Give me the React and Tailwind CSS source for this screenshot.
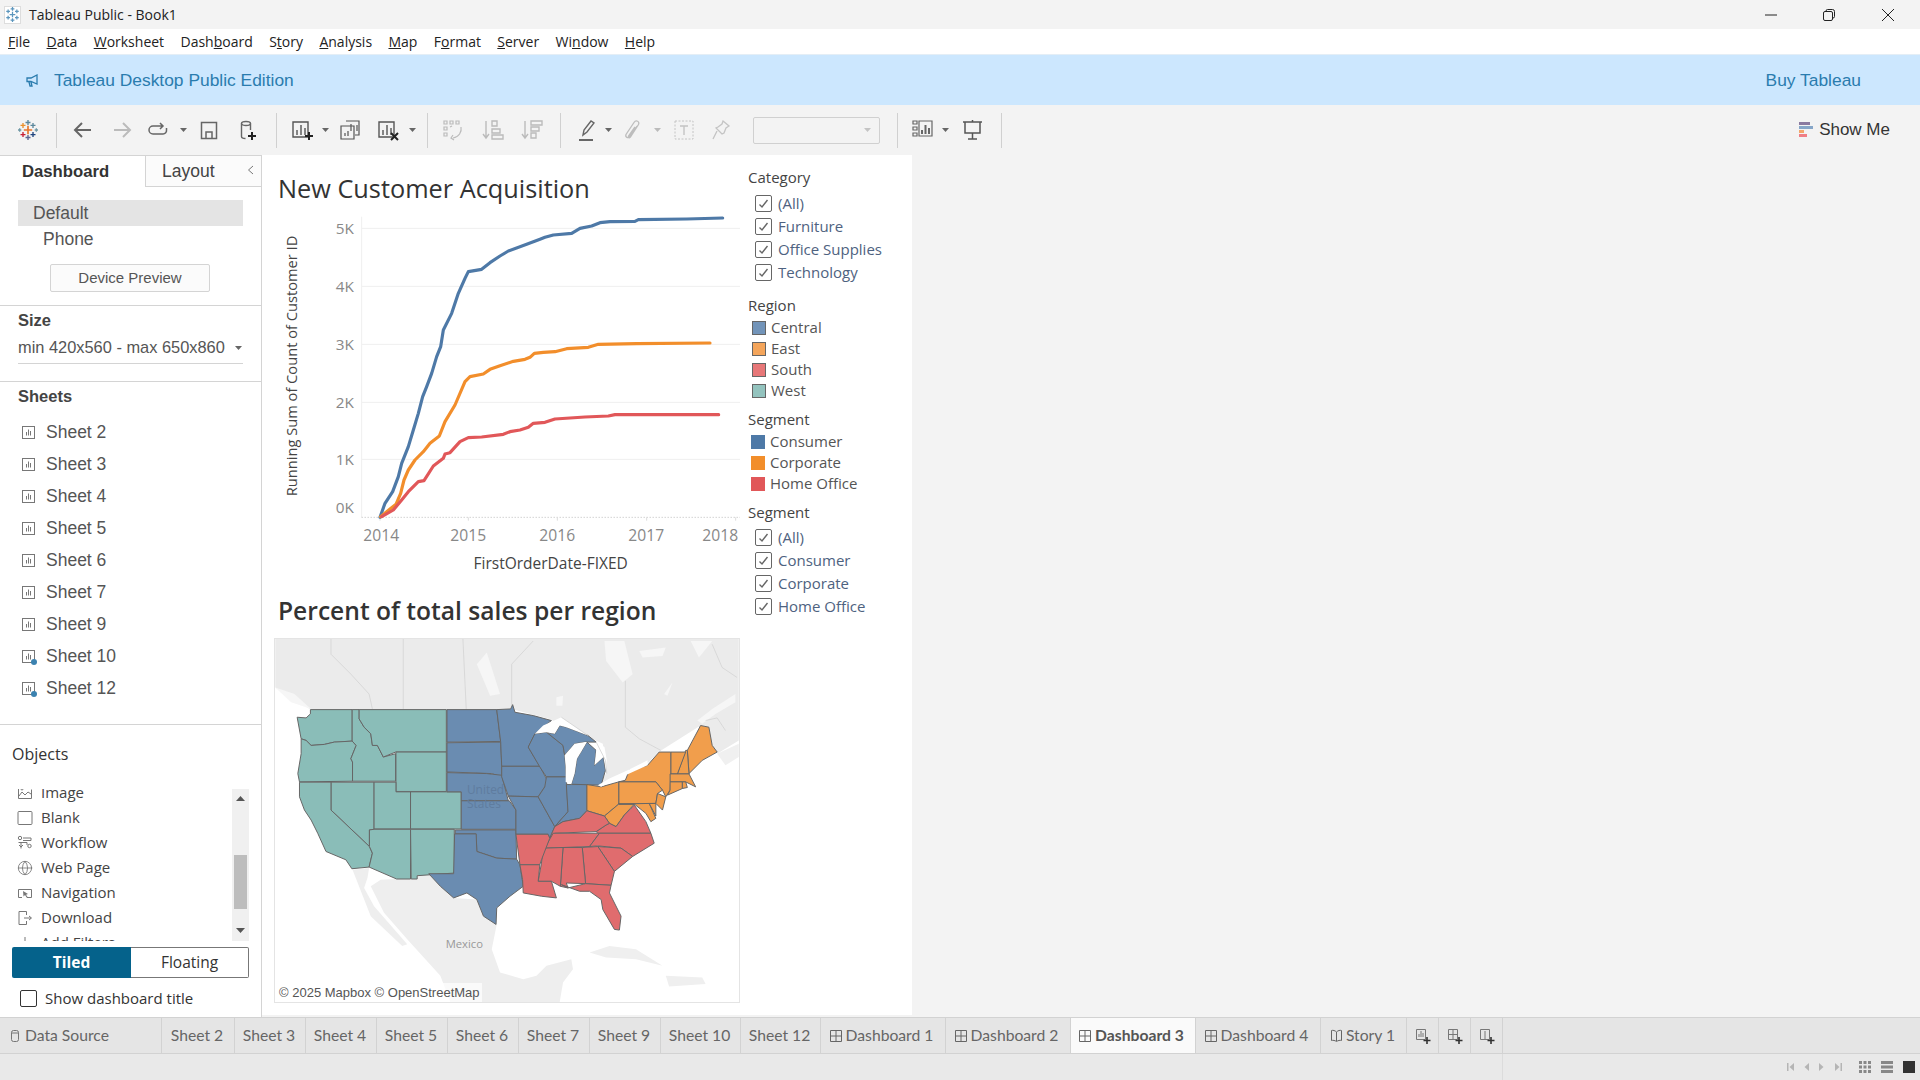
import React from "react";
import { Globe } from "lucide-react";

const Ico = ({ className = "", children, w = 24, h = 24, vb = "0 0 24 24" }) => (
  <div className={`w-[32px] h-[32px] shrink-0 flex items-center justify-center ${className}`}>
    <svg width={w} height={h} viewBox={vb} fill="none">{children}</svg>
  </div>
);
const Caret = ({ className = "", dim = false }) => (
  <div className={`w-[12px] flex justify-center shrink-0 ${className}`}>
    <svg width="7" height="4" viewBox="0 0 7 4"><path d="M0 0h7L3.5 4z" fill={dim ? "#bbb" : "#666"} /></svg>
  </div>
);
const Sep = ({ className = "" }) => <div className={`w-px h-[35px] bg-[#d0d0d0] shrink-0 ${className}`} />;

const Plus = ({ x, y, c, s = 3, sw = 1.6 }) => (
  <path d={`M${x - s} ${y}h${2 * s}M${x} ${y - s}v${2 * s}`} stroke={c} strokeWidth={sw} />
);
const Logo = () => (
  <svg width="20" height="20" viewBox="0 0 24 24">
    <Plus x={12} y={12} c="#e8762b" s={5} sw={2} />
    <Plus x={12} y={3} c="#5b879b" />
    <Plus x={12} y={21} c="#5b6591" />
    <Plus x={6} y={6.5} c="#eb912b" />
    <Plus x={18} y={6.5} c="#5b879b" />
    <Plus x={6} y={17.5} c="#c72035" />
    <Plus x={18} y={17.5} c="#1f447e" />
    <Plus x={2} y={12} c="#7099a6" s={2} />
    <Plus x={22} y={12} c="#7099a6" s={2} />
  </svg>
);

const tabs = [
  { t: "Sheet 2", w: "w-[73px]" },
  { t: "Sheet 3", w: "w-[71px]" },
  { t: "Sheet 4", w: "w-[71px]" },
  { t: "Sheet 5", w: "w-[71px]" },
  { t: "Sheet 6", w: "w-[71px]" },
  { t: "Sheet 7", w: "w-[71px]" },
  { t: "Sheet 9", w: "w-[71px]" },
  { t: "Sheet 10", w: "w-[80px]" },
  { t: "Sheet 12", w: "w-[80px]" },
];
const dashTabs = [
  { t: "Dashboard 1", w: "w-[125px]" },
  { t: "Dashboard 2", w: "w-[125px]" },
  { t: "Dashboard 3", w: "w-[125px]", active: true },
  { t: "Dashboard 4", w: "w-[125px]" },
];

const TabGrid = () => (
  <svg width="12" height="12" viewBox="0 0 12 12" fill="none" stroke="#666" className="shrink-0">
    <path d="M.5.5h11v11H.5zM6 .5v11M.5 6h11" />
  </svg>
);

const menu = [
  ["", "F", "ile"], ["", "D", "ata"], ["", "W", "orksheet"], ["Dash", "b", "oard"], ["S", "t", "ory"],
  ["", "A", "nalysis"], ["", "M", "ap"], ["F", "o", "rmat"], ["", "S", "erver"], ["Wi", "n", "dow"], ["", "H", "elp"],
];

const SheetIcon = ({ dot }) => (
  <div className="relative w-[13px] h-[13px] shrink-0">
    <svg width="13" height="13" viewBox="0 0 13 13" fill="none" stroke="#777">
      <rect x=".5" y=".5" width="12" height="12" />
      <path d="M4.5 9.5V6M6.5 9.5V3.5M8.5 9.5V5" />
    </svg>
    {dot && <div className="absolute -right-[2px] -bottom-[2px] w-[6px] h-[6px] rounded-full bg-[#3b82b0]" />}
  </div>
);

const sheets = [["Sheet 2"], ["Sheet 3"], ["Sheet 4"], ["Sheet 5"], ["Sheet 6"], ["Sheet 7"], ["Sheet 9"], ["Sheet 10", 1], ["Sheet 12", 1]];

const objIcon = {
  Image: <g stroke="#777"><path d="M1.5 2.500v11h13v-9" /><path d="M2 11l3-4 3 3 3-3 3 2" /><circle cx="5" cy="4" r="1" /></g>,
  Blank: <rect x="1" y="1.500" width="14" height="13" rx="1" stroke="#777" />,
  Workflow: <g stroke="#777"><circle cx="3" cy="3" r="1.700" /><path d="M6 3h8v2.500H6M1.500 7.500H10V10M2 10l2 2 2-2" /><circle cx="12.500" cy="11" r="1.700" /><path d="M4 7.500v6" /></g>,
  Navigation: <g stroke="#777"><path d="M5 12.500H1.500V4.500h13v8H10" /><path d="M6 6l5 3-2 .7 1.800 2.500-1 .6L8 10l-1.500 1.500z" fill="#777" stroke="none" /></g>,
  Download: <g stroke="#777"><path d="M9.500 5V1.500H2v13h7.500V11" /><path d="M7 8h7M12 6l2.500 2-2.500 2" /></g>,
};
const objects = ["Image", "Blank", "Workflow", "Web Page", "Navigation", "Download", "Add Filters"];

const CheckRow = ({ label }) => (
  <div className="h-[23px] flex items-center pl-[15px] text-[15px] text-[#4e6280]">
    <div className="w-[17px] h-[17px] border border-[#666] rounded-[2px] flex items-center justify-center shrink-0">
      <svg width="11" height="10" viewBox="0 0 11 10" fill="none"><path d="M1.500 5.500L4 8l5.500-7" stroke="#666" strokeWidth="1.400" /></svg>
    </div>
    <span className="ml-[6px] whitespace-nowrap">{label}</span>
  </div>
);
const LegendRow = ({ label, swatch, className = "" }) => (
  <div className={`h-[21px] flex items-center text-[15px] text-[#555555] ${className}`}>
    {swatch}
    <span className="ml-[5px] whitespace-nowrap">{label}</span>
  </div>
);
const Sw = ({ c }) => <div className={`w-[14px] h-[14px] shrink-0 ${c}`} />;
const SwB = ({ c }) => <div className={`w-[14px] h-[14px] shrink-0 border border-[#666] ${c}`} />;

const blue = "M330,1072 345,1030 368,995 385,950 395,910 415,860 430,810 445,760 458,710 470,680 485,640 500,590 512,560 520,510 545,460 565,400 585,355 595,335 635,328 660,308 690,288 715,273 770,253 810,238 825,232 850,225 905,220 930,205 965,198 990,188 1020,185 1095,184 1105,179 1250,177 1358,174";
const orange = "M332,1070 350,1055 378,1033 392,1000 402,960 415,930 435,900 460,875 480,850 508,828 525,785 555,735 585,665 600,650 640,642 660,628 690,617 730,604 765,598 780,592 793,580 820,577 855,575 890,566 955,562 985,553 1100,551 1320,549";
const red = "M335,1070 370,1050 395,1020 415,995 445,965 462,962 490,918 520,895 525,882 540,878 570,845 595,833 635,831 700,823 720,815 750,810 775,802 790,790 825,787 855,777 900,774 945,771 1015,768 1035,764 1346,764";

const Chart = () => (
  <svg width="470" height="377" viewBox="0 150 1410 1131" className="block" fontFamily="'Open Sans',sans-serif">
    {[205, 379, 553, 727, 898].map((y) => <path key={y} d={`M275 ${y}H1410`} stroke="#efefef" strokeWidth="3" />)}
    <path d="M275 170V1072" stroke="#efefef" strokeWidth="3" />
    <path d="M275 1072H1410" stroke="#bbb" strokeWidth="3" strokeDasharray="3 6" />
    {[330, 595, 862, 1130, 1397].map((x) => <path key={x} d={`M${x} 1072v10`} stroke="#ddd" strokeWidth="3" />)}
    {[["5K", 222], ["4K", 396], ["3K", 570], ["2K", 744], ["1K", 915], ["0K", 1059]].map(([t, y]) => (
      <text key={t} x="252" y={y} textAnchor="end" fontSize="46" fill="#888">{t}</text>
    ))}
    {[["2014", 280], ["2015", 541], ["2016", 808], ["2017", 1075], ["2018", 1297]].map(([t, x]) => (
      <text key={t} x={x} y="1143" fontSize="47" fill="#888">{t}</text>
    ))}
    <text x="842" y="1226" textAnchor="middle" fontSize="46.500" fontWeight="500" fill="#444">FirstOrderDate-FIXED</text>
    <text transform="translate(80 618) rotate(-90)" textAnchor="middle" fontSize="44" fontWeight="500" fill="#444">Running Sum of Count of Customer ID</text>
    <path d={blue} fill="none" stroke="#4e79a7" strokeWidth="9.500" strokeLinejoin="round" strokeLinecap="round" />
    <path d={orange} fill="none" stroke="#f28e2b" strokeWidth="9.500" strokeLinejoin="round" strokeLinecap="round" />
    <path d={red} fill="none" stroke="#e15759" strokeWidth="9.500" strokeLinejoin="round" strokeLinecap="round" />
  </svg>
);

const west = [
  "118,237 244,237 244,332 190,335 160,342 120,345 105,330 90,325 78,260 105,262 118,250",
  "90,325 105,330 120,345 160,342 190,335 244,332 256,345 240,385 245,395 245,453 85,455 80,430 90,370",
  "244,237 265,237 265,265 280,290 300,310 305,345 320,345 338,380 375,370 375,453 245,453 245,395 240,385 256,345 244,332",
  "265,237 528,237 528,365 375,365 338,380 320,345 305,345 300,310 280,290 265,265",
  "376,365 528,365 528,484 376,484",
  "180,456 310,456 310,600 296,600 296,650 180,540",
  "85,456 180,456 180,540 296,650 305,670 295,712 243,717 225,690 165,665 140,610 120,570 100,540 85,500",
  "310,456 376,456 376,485 420,485 420,597 310,597",
  "420,485 573,485 573,597 420,597",
  "310,598 420,598 420,748 378,748 295,712 305,670 296,650 296,600",
  "420,598 552,598 552,730 440,738 440,748 422,748",
];
const central = [
  "530,237 680,237 692,333 530,335",
  "530,337 692,335 695,400 695,440 665,430 530,425",
  "530,427 650,430 695,435 715,512 573,512 573,485 530,485",
  "573,512 718,512 738,540 738,598 573,598",
  "555,600 738,600 740,688 680,685 620,665 618,612 555,612",
  "553,612 618,612 620,665 680,685 740,688 750,705 760,770 720,800 680,835 678,885 640,860 620,810 590,790 550,805 510,770 475,732 550,732",
  "680,237 722,235 728,222 735,245 790,255 845,270 795,310 775,350 810,408 695,408 692,335",
  "695,408 810,408 835,455 805,500 715,498 695,440",
  "715,498 805,500 855,590 840,625 835,613 738,613 738,540",
  "775,350 795,310 830,305 880,345 885,375 888,410 890,440 830,440 810,410",
  "830,440 890,440 895,545 855,590 805,500 825,470",
  "890,463 952,463 952,542 930,565 880,575 855,590 895,545",
  "830,305 855,310 870,285 890,290 955,315 980,335 945,335 915,340 885,375 880,345",
  "952,335 937,360 922,385 915,430 905,462 995,465 1008,420 1002,380 975,405 980,360",
];
const east = [
  "1255,360 1295,285 1320,290 1330,345 1345,365 1300,390 1260,430",
  "1225,431 1250,360 1255,360 1260,431",
  "1205,365 1250,365 1225,431 1205,431",
  "1068,450 1080,420 1135,405 1170,365 1205,365 1205,431 1203,480 1190,500 1180,480 1160,455 1048,455",
  "1048,455 1160,455 1180,480 1165,490 1160,520 1048,522",
  "952,463 995,470 1048,455 1048,522 1005,558 952,542",
  "1005,558 1048,522 1095,522 1065,555 1040,590 1020,580",
  "1048,522 1140,520 1160,565 1145,575 1130,550 1095,522",
  "1140,520 1160,520 1160,558",
  "1165,490 1190,500 1180,540 1160,520",
  "1203,431 1260,431 1280,470 1250,455 1203,455",
  "1203,455 1240,455 1240,475 1195,495 1203,480",
  "1240,455 1250,455 1255,472 1240,475",
];
const south = [
  "980,605 1010,585 1020,580 1040,590 1065,555 1085,535 1095,525 1130,575 1145,610 985,610",
  "840,625 855,590 880,575 930,565 952,542 1005,558 1020,580 1010,585 980,605 855,610",
  "825,655 850,610 990,610 960,650",
  "960,650 990,610 1145,610 1155,640 1090,680 1055,655 985,648",
  "985,650 1055,655 1090,680 1035,725",
  "938,653 985,650 1035,725 1025,767 948,762",
  "880,653 938,653 948,762 890,760 895,775 872,770",
  "820,655 880,653 872,770 845,755 805,755 815,700",
  "738,613 835,613 840,625 815,690 810,705 750,705",
  "750,705 810,705 805,755 845,755 860,805 815,800 760,790 758,750",
  "875,765 895,775 948,762 1025,767 1020,790 1055,860 1050,902 1035,900 1000,840 995,810 960,785 930,785",
];
const States = ({ list, fill }) => list.map((p, i) => <polygon key={i} points={p} fill={fill} stroke="#666" strokeWidth="3" strokeLinejoin="round" />);

const MapView = () => (
  <div className="relative w-[466px] h-[365px] ml-[4px] border border-[#e4e4e4] overflow-hidden">
    <svg width="464" height="363" viewBox="12 24 1398 1095" className="block">
      <rect x="0" y="0" width="1440" height="1140" fill="#ffffff" />
      <polygon points="12,170 60,200 118,237 730,237 840,265 1000,340 1010,430 985,465 1080,430 1140,395 1165,367 1290,288 1345,370 1410,330 1410,24 12,24" fill="#ebebeb" />
      <polygon points="330,750 378,748 475,732 550,805 620,810 640,860 680,885 665,960 690,1030 760,1050 800,1040 830,1010 905,990 910,1020 880,1060 870,1119 540,1119 510,1040 410,930 340,850 300,770" fill="#eeeeee" />
      <polygon points="245,720 295,715 290,745 280,775 310,830 410,945 395,950 300,860" fill="#eeeeee" />
      <polygon points="960,970 1020,950 1100,960 1180,1010 1100,990 1010,985" fill="#efefef" />
      <polygon points="1190,1040 1300,1045 1310,1065 1200,1072" fill="#efefef" />
      <polygon points="1345,370 1410,340 1410,380 1370,405" fill="#f0f0f0" />
      <g fill="#f6f6f6">
        <polygon points="620,100 650,65 690,190 660,195" />
        <polygon points="1005,30 1065,30 1090,130 1060,155 1010,90" />
        <polygon points="1110,60 1190,50 1180,75 1120,80" />
        <polygon points="1265,30 1330,30 1290,80" />
        <polygon points="1285,270 1330,235 1400,190 1400,215 1340,250 1300,280" />
        <polygon points="12,170 70,190 120,235 60,215" />
        <polygon points="1185,190 1210,155 1195,195" />
        <polygon points="860,200 880,195 878,225 860,225" />
      </g>
      <g fill="none" stroke="#cfcfcf" strokeWidth="2">
        <path d="M180,24V70L240,130 295,190 305,235" />
        <path d="M398,24V235" />
        <path d="M578,24 588,235" />
        <path d="M790,30 725,100V225" />
        <path d="M1068,150V290L1110,325 1175,360" />
        <path d="M1310,270 1345,262 1370,300" />
        <path d="M1330,40 1360,110 1405,140" />
      </g>
      <States list={west} fill="#8abdb8" />
      <States list={central} fill="#6a8cb1" />
      <States list={east} fill="#f19e4c" />
      <States list={south} fill="#e06c6e" />
      <polygon points="795,310 820,285 875,260 955,315 890,290 870,285 855,310 830,305" fill="#ffffff" />
      <polygon points="947,335 915,340 885,375 888,410 888,455 905,462 915,430 922,385 937,360 952,335" fill="#ffffff" />
      <polygon points="980,335 980,360 975,405 1002,380 1010,425 1012,390 1005,350" fill="#ffffff" />
      <polygon points="985,465 1020,445 1075,420 1135,390 1135,405 1080,430 1025,455 995,470" fill="#ffffff" />
      <path d="M875,260 955,315M980,335 1008,390 1012,430" fill="none" stroke="#c9c9c9" strokeWidth="2" />
      <text x="590" y="491" fontSize="36" fill="#5f7c9f" fontFamily="'Open Sans',sans-serif">United</text>
      <text x="590" y="534" fontSize="36" fill="#5f7c9f" fontFamily="'Open Sans',sans-serif">States</text>
      <text x="526" y="957" fontSize="34" fill="#999" fontFamily="'Open Sans',sans-serif">Mexico</text>
    </svg>
    <div className="absolute left-[2px] bottom-0 px-[2px] h-[19px] flex items-center bg-white/70 text-[13px] text-[#555] font-['Liberation_Sans',sans-serif] whitespace-nowrap">© 2025 Mapbox © OpenStreetMap</div>
  </div>
);

export default function App() {
  return (
    <div className="w-[1920px] h-[1080px] flex flex-col overflow-hidden bg-[#f3f3f3] font-['Open_Sans',sans-serif] text-[#333]">
      {/* title bar */}
      <div className="h-[29px] flex items-center bg-[#f3f3f3] shrink-0">
        <div className="w-[17px] h-[18px] ml-[4px] bg-white border border-[#ddd] flex items-center justify-center">
          <svg width="15" height="15" viewBox="0 0 24 24">
            <Plus x={12} y={12} c="#5c96bd" s={4.5} sw={2} /><Plus x={12} y={3} c="#5c96bd" sw={2} /><Plus x={12} y={21} c="#5c96bd" sw={2} />
            <Plus x={5} y={7} c="#5c96bd" sw={2} /><Plus x={19} y={7} c="#5c96bd" sw={2} /><Plus x={5} y={17} c="#5c96bd" sw={2} /><Plus x={19} y={17} c="#5c96bd" sw={2} />
          </svg>
        </div>
        <span className="ml-[8px] text-[14px] text-[#222]">Tableau Public - Book1</span>
        <div className="ml-auto flex items-center">
          <svg width="12" height="2" viewBox="0 0 12 2" className="mr-[46px]"><path d="M0 1h12" stroke="#222" /></svg>
          <svg width="12" height="12" viewBox="0 0 12 12" fill="none" stroke="#222" className="mr-[47px]"><rect x=".5" y="2.500" width="9" height="9" rx="1.500" /><path d="M3 2.500V2A1.500 1.500 0 0 1 4.500.5h5A2 2 0 0 1 11.500 2.500v5A1.500 1.500 0 0 1 10 9h-.5" /></svg>
          <svg width="12" height="12" viewBox="0 0 12 12" className="mr-[26px]"><path d="M0 0l12 12M12 0L0 12" stroke="#222" /></svg>
        </div>
      </div>
      {/* menu */}
      <div className="h-[25px] bg-white flex items-center pl-[8px] gap-[16.4px] text-[14px] text-[#222] shrink-0">
        {menu.map(([a, b, c]) => <span key={a + b + c}>{a}<u>{b}</u>{c}</span>)}
      </div>
      {/* banner */}
      <div className="h-[51px] bg-[#cce7fe] border-t border-[#e4eef6] flex items-center shrink-0 font-['Liberation_Sans',sans-serif] text-[17.4px] text-[#2a7cae]">
        <svg width="13" height="13" viewBox="0 0 13 13" fill="none" stroke="#2a7cae" strokeWidth="1.300" className="ml-[26px]"><path d="M1 4h4l6-3v9L5 7.500H1zM3 8l1 4h2l-1-4" /></svg>
        <span className="ml-[15px]">Tableau Desktop Public Edition</span>
        <span className="ml-auto mr-[59px]">Buy Tableau</span>
      </div>
      {/* toolbar */}
      <div className="h-[50px] flex items-center shrink-0 bg-[#f3f3f3]">
        <div className="w-[56px] flex justify-center shrink-0"><Logo /></div>
        <Sep />
        <Ico className="ml-[10px]"><path d="M20 12H5M11 5l-7 7 7 7" stroke="#666" strokeWidth="2" /></Ico>
        <Ico className="ml-[7px]"><path d="M4 12h15M13 5l7 7-7 7" stroke="#bbb" strokeWidth="2" /></Ico>
        <Ico className="ml-[4px]"><path d="M16 8H7a3.500 3.500 0 0 0 0 8h10a3.500 3.500 0 0 0 3.500-4V10M14 5l3 3-3 3" stroke="#666" strokeWidth="1.500" /></Ico>
        <Caret className="ml-[3px]" />
        <Ico className="ml-[4px]"><path d="M4.500 4.500h15v16h-15zM9 20v-6h6v6" stroke="#666" strokeWidth="1.500" /></Ico>
        <Ico className="ml-[6px]"><g stroke="#666" strokeWidth="1.400"><ellipse cx="11" cy="5.500" rx="4.500" ry="2" /><path d="M6.500 5.500v13c0 1 1.500 2 4 2M15.500 5.500V12" /></g><path d="M17 14v8M13 18h8" stroke="#222" strokeWidth="2" /></Ico>
        <Sep className="ml-[13px]" />
        <Ico className="ml-[9px]"><path d="M3 4h15v15H3zM7 17v-5M11 17V7M15 17v-7" stroke="#555" strokeWidth="1.400" /><path d="M19 14v8M15 18h8" stroke="#222" strokeWidth="2" /></Ico>
        <Caret className="ml-[1px]" />
        <Ico className="ml-[3px]"><path d="M8 3h13v14h-4M3 8h13v13H3zM13 13V6M16 13V8M19 13V7M7 18v-3M10 18v-5" stroke="#555" strokeWidth="1.200" /></Ico>
        <Ico className="ml-[6px]"><path d="M3 4h15v15H3zM7 17v-5M11 17V7M15 17v-7" stroke="#555" strokeWidth="1.400" /><path d="M15 15l7 7M22 15l-7 7" stroke="#222" strokeWidth="2" /></Ico>
        <Caret className="ml-[2px]" />
        <Sep className="ml-[9px]" />
        <Ico className="ml-[9px]"><g stroke="#bbb" strokeWidth="1.200"><path d="M3 3h3v3H3zM9 3h3v3H9zM15 3h3v3h-3zM3 9h3v3H3zM3 15h3v3H3z" /><path d="M20 9c1 5-2 10-8 11M12 17l-2 3 3 2M9 9l2-1" /></g></Ico>
        <Ico className="ml-[8px]"><g stroke="#bbb" strokeWidth="1.400"><path d="M5 3v16M2 16l3 4 3-4M11 3h5v5h-5zM11 11h8v4h-8zM11 17h11v4H11z" /></g></Ico>
        <Ico className="ml-[7px]"><g stroke="#bbb" strokeWidth="1.400"><path d="M5 3v16M2 16l3 4 3-4M11 3h11v4H11zM11 9h8v4h-8zM11 15h5v5h-5z" /></g></Ico>
        <Sep className="ml-[12px]" />
        <Ico className="ml-[10px]"><path d="M8 17l1-5 7-9 3 2-7 9z" stroke="#666" strokeWidth="1.400" /><path d="M4 22h14" stroke="#666" strokeWidth="2" /></Ico>
        <Caret className="-ml-[1px]" />
        <Ico className="ml-[3px]"><path d="M16 8l-7 10c-2 3-5 1-4-1.500l8-12c2-3 6-1 4.500 2l-8 12.500c-1 1.500-2.500.5-2-1L14 9" stroke="#bdbdbd" strokeWidth="1.300" /></Ico>
        <Caret className="ml-[2px]" dim />
        <Ico className="ml-[5px]"><path d="M3 3h18v18H3z" stroke="#c4c4c4" strokeDasharray="2 1.500" /><path d="M8 8h8M12 8v9" stroke="#c4c4c4" strokeWidth="1.400" /></Ico>
        <Ico className="ml-[5px]"><path d="M14 3l6 5-3 2-2 5-2 1-6-6 2-1 4-3zM8 13l-4 8" stroke="#c4c4c4" strokeWidth="1.300" /></Ico>
        <div className="ml-[16px] w-[127px] h-[27px] border border-[#d0d0d0] rounded-[2px] flex items-center justify-end pr-[8px] shrink-0">
          <svg width="7" height="4" viewBox="0 0 7 4"><path d="M0 0h7L3.500 4z" fill="#c4c4c4" /></svg>
        </div>
        <Sep className="ml-[17px]" />
        <Ico className="ml-[10px]"><g stroke="#666" strokeWidth="1.200"><path d="M1 3h4v3H1zM1 9h4v3H1zM1 15h4v3H1zM7 3h13v15H7z" /></g><path d="M10 16v-4M13.500 16V7M17 16v-6" stroke="#666" strokeWidth="2" /></Ico>
        <Caret className="-ml-[1px]" />
        <Ico className="ml-[7px]"><g stroke="#555" strokeWidth="1.500"><path d="M1 4h19M3 4v11h15V4M10.500 15v6M6 21h9M10.500 2v2" /></g></Ico>
        <Sep className="ml-[11px]" />
        <div className="ml-auto mr-[30px] flex items-center font-['Liberation_Sans',sans-serif] text-[17px] text-[#333]">
          <svg width="14" height="16" viewBox="0 0 14 16" className="mr-[6px]">
            <rect width="11" height="3" fill="#8a7aa0" /><rect y="4" width="14" height="3" fill="#86a6c8" /><rect y="8" width="5" height="3" fill="#f3a66a" /><rect y="12" width="8" height="3" fill="#f07e85" />
          </svg>
          Show Me
        </div>
      </div>
      {/* middle */}
      <div className="flex-1 flex min-h-0 relative">
        {/* left pane */}
        <div className="w-[262px] bg-white border-t border-r border-[#d4d4d4] flex flex-col shrink-0 font-['Liberation_Sans',sans-serif] text-[#555]">
          <div className="h-[31px] flex shrink-0">
            <div className="w-[146px] flex items-center pl-[22px] text-[16.7px] font-bold text-[#333] border-r border-[#d4d4d4]">Dashboard</div>
            <div className="flex-1 flex items-center border-b border-[#d4d4d4] pl-[16px] text-[17.5px] text-[#444] relative bg-[#fbfbfb]">
              Layout
              <svg width="7" height="10" viewBox="0 0 7 10" fill="none" className="absolute right-[7px] top-[9px]"><path d="M6 1L1.500 5 6 9" stroke="#777" /></svg>
            </div>
          </div>
          <div className="h-[119px] border-b border-[#d4d4d4] px-[18px] pt-[13px] shrink-0">
            <div className="h-[26px] bg-[#e4e4e4] flex items-center pl-[15px] text-[17.5px]">Default</div>
            <div className="h-[26px] flex items-center pl-[25px] text-[17.5px]">Phone</div>
            <div className="mt-[12px] ml-[32px] w-[160px] h-[28px] bg-[#fbfbfb] border border-[#d4d4d4] rounded-[2px] flex items-center justify-center text-[15px]">Device Preview</div>
          </div>
          <div className="h-[76px] border-b border-[#d4d4d4] px-[18px] pt-[4px] shrink-0">
            <div className="text-[16.5px] font-bold text-[#444] leading-[20px]">Size</div>
            <div className="mt-[6px] h-[28px] pb-[4px] border-b border-[#d4d4d4] flex items-center justify-between text-[16.4px]">
              <span className="whitespace-nowrap">min 420x560 - max 650x860</span>
              <svg width="7" height="4" viewBox="0 0 7 4" className="mr-[1px]"><path d="M0 0h7L3.500 4z" fill="#666" /></svg>
            </div>
          </div>
          <div className="h-[343px] border-b border-[#d4d4d4] shrink-0">
            <div className="pl-[18px] pt-[4px] text-[16.5px] font-bold text-[#444] leading-[20px]">Sheets</div>
            <div className="mt-[10px]">
              {sheets.map(([s, d]) => (
                <div key={s} className="h-[32px] flex items-center pl-[22px] text-[17.5px]">
                  <SheetIcon dot={d} /><span className="ml-[11px]">{s}</span>
                </div>
              ))}
            </div>
          </div>
          <div className="flex-1 pl-[12px] font-['Open_Sans',sans-serif] relative min-h-0">
            <div className="pt-[19px] text-[16px] font-medium text-[#333] leading-[21px]">Objects</div>
            <div className="mt-[24px] relative h-[152px] w-[237px] overflow-hidden">
              <div className="-mt-[9px]">
                {objects.map((o) => (
                  <div key={o} className="h-[25px] flex items-center pl-[5px] text-[15px] text-[#444] whitespace-nowrap">
                    <div className="w-[16px] h-[16px] shrink-0">
                      {o === "Web Page" ? <Globe size={16} color="#777" strokeWidth={1.3} /> : (
                        <svg width="16" height="16" viewBox="0 0 16 16" fill="none">{objIcon[o] || <path d="M8 2v4M4 14c0-5 8-5 8 0" stroke="#777" />}</svg>
                      )}
                    </div>
                    <span className="ml-[8px]">{o}</span>
                  </div>
                ))}
              </div>
              <div className="absolute right-0 top-0 w-[17px] h-full bg-[#f0f0f0] flex flex-col items-center">
                <svg width="9" height="5" viewBox="0 0 9 5" className="mt-[7px]"><path d="M0 5h9L4.500 0z" fill="#555" /></svg>
                <div className="w-[13px] h-[54px] bg-[#bdbdbd] mt-[54px]" />
                <svg width="9" height="5" viewBox="0 0 9 5" className="mt-[19px]"><path d="M0 0h9L4.500 5z" fill="#555" /></svg>
              </div>
            </div>
            <div className="mt-[6px] w-[237px] h-[31px] flex text-[15.5px] rounded-[2px]">
              <div className="w-[119px] bg-[#05628b] text-white font-bold flex items-center justify-center rounded-l-[2px]">Tiled</div>
              <div className="flex-1 border border-[#777] border-l-0 rounded-r-[2px] text-[#333] font-medium flex items-center justify-center bg-white">Floating</div>
            </div>
            <div className="mt-[9px] ml-[8px] flex items-center">
              <div className="w-[17px] h-[17px] border border-[#333] rounded-[2px] bg-white" />
              <span className="ml-[8px] text-[15px] text-[#333] whitespace-nowrap">Show dashboard title</span>
            </div>
          </div>
        </div>
        {/* dashboard */}
        <div className="w-[650px] h-[860px] bg-white flex shrink-0">
          <div className="w-[478px] shrink-0 pl-[8px]">
            <div className="h-[55px] pl-[8px] pt-[14px] text-[25.3px] leading-[38px] text-[#333] whitespace-nowrap">New Customer Acquisition</div>
            <Chart />
            <div className="h-[51px] pl-[8px] pt-[6px] text-[24.6px] leading-[36px] font-semibold text-[#333] whitespace-nowrap">Percent of total sales per region</div>
            <MapView />
          </div>
          <div className="flex-1 pt-[12px]">
            <div className="pl-[8px] text-[15px] font-medium text-[#444] h-[20px] leading-[20px]">Category</div>
            <div className="mt-[5px]">
              <CheckRow label="(All)" /><CheckRow label="Furniture" /><CheckRow label="Office Supplies" /><CheckRow label="Technology" />
            </div>
            <div className="pl-[8px] mt-[11px] text-[15px] font-medium text-[#444] h-[20px] leading-[20px]">Region</div>
            <div className="mt-[2px]">
              <LegendRow className="pl-[12px]" label="Central" swatch={<SwB c="bg-[#7294b9]" />} />
              <LegendRow className="pl-[12px]" label="East" swatch={<SwB c="bg-[#f4a55b]" />} />
              <LegendRow className="pl-[12px]" label="South" swatch={<SwB c="bg-[#e77778]" />} />
              <LegendRow className="pl-[12px]" label="West" swatch={<SwB c="bg-[#93c3be]" />} />
            </div>
            <div className="pl-[8px] mt-[8px] text-[15px] font-medium text-[#444] h-[20px] leading-[20px]">Segment</div>
            <div className="mt-[2px]">
              <LegendRow className="pl-[11px]" label="Consumer" swatch={<Sw c="bg-[#4e79a7]" />} />
              <LegendRow className="pl-[11px]" label="Corporate" swatch={<Sw c="bg-[#f28e2b]" />} />
              <LegendRow className="pl-[11px]" label="Home Office" swatch={<Sw c="bg-[#e15759]" />} />
            </div>
            <div className="pl-[8px] mt-[8px] text-[15px] font-medium text-[#444] h-[20px] leading-[20px]">Segment</div>
            <div className="mt-[4px]">
              <CheckRow label="(All)" /><CheckRow label="Consumer" /><CheckRow label="Corporate" /><CheckRow label="Home Office" />
            </div>
          </div>
        </div>
      </div>
      {/* tabs */}
      <div className="h-[37px] bg-[#e5e5e5] border-y border-[#d2d2d2] flex shrink-0 font-['Lato',sans-serif] text-[15.7px] text-[#666] whitespace-nowrap">
        <div className="w-[162px] flex items-center pl-[11px] border-r border-[#d2d2d2]">
          <svg width="8" height="12" viewBox="0 0 8 12" fill="none" stroke="#777" className="mr-[6px]"><rect x=".5" y=".5" width="7" height="11" rx="2" /><path d="M.5 3h7" /></svg>
          Data Source
        </div>
        {tabs.map((t) => <div key={t.t} className={`${t.w} pr-[2px] flex items-center justify-center border-r border-[#d2d2d2]`}>{t.t}</div>)}
        {dashTabs.map((t) => (
          <div key={t.t} className={`${t.w} pr-[3px] flex items-center justify-center gap-[4px] border-r border-[#d2d2d2] ${t.active ? "bg-[#fafafa] font-bold text-[#555]" : ""}`}>
            <TabGrid />{t.t}
          </div>
        ))}
        <div className="w-[86px] pr-[1px] flex items-center justify-center gap-[4px] border-r border-[#d2d2d2]">
          <svg width="11" height="13" viewBox="0 0 11 13" fill="none" stroke="#666"><path d="M5.500 3C4 1.500 2 1 .5 1.500v10c1.500-.5 3.500 0 5 1 1.500-1 3.500-1.500 5-1v-10C9 1 7 1.500 5.500 3zM5.500 3v9" /></svg>
          Story 1
        </div>
        {[0, 1, 2].map((i) => (
          <div key={i} className="w-[32px] flex items-center justify-center border-r border-[#d2d2d2]">
            <svg width="16" height="16" viewBox="0 0 16 16" fill="none">
              <path d="M1.500 1.500h9v10h-9z" stroke="#777" />
              {i === 0 && <path d="M4 9V6M6 9V3M8 9V5" stroke="#777" />}
              {i === 1 && <path d="M6 1.500v10M1.500 6.500h9" stroke="#777" />}
              {i === 2 && <path d="M6 3v8" stroke="#777" />}
              <path d="M12 9v7M8.500 12.500h7" stroke="#333" strokeWidth="1.600" />
            </svg>
          </div>
        ))}
      </div>
      {/* status */}
      <div className="h-[26px] bg-[#e9e9e9] flex items-center shrink-0 relative">
        <div className="ml-[1502px] w-px h-full bg-[#dcdcdc]" />
        <div className="ml-auto mr-[5px] flex items-center">
          <div className="flex items-center gap-[8px] mr-[16px]">
            {[
              "M0 0h1.500v8H0zM7 0v8L2.500 4z", "M6 0v8L1.500 4z", "M0 0v8l4.500-4z", "M0 0v8l4.500-4zM5.500 0H7v8H5.500z",
            ].map((d) => <svg key={d} width="8" height="8" viewBox="0 0 8 8"><path d={d} fill="#b5b5b5" /></svg>)}
          </div>
          <svg width="12" height="12" viewBox="0 0 12 12" className="mr-[10px]"><path d="M0 0h3v3H0zM4.500 0h3v3h-3zM9 0h3v3H9zM0 4.500h3v3H0zM4.500 4.500h3v3h-3zM9 4.500h3v3H9zM0 9h3v3H0zM4.500 9h3v3h-3zM9 9h3v3H9z" fill="#888" /></svg>
          <svg width="12" height="12" viewBox="0 0 12 12" className="mr-[10px]"><path d="M0 0h12v3H0zM0 4.500h12v3H0zM0 9h12v3H0z" fill="#888" /></svg>
          <svg width="12" height="12" viewBox="0 0 12 12"><path d="M0 0h12v12H0z" fill="#333" /></svg>
        </div>
      </div>
    </div>
  );
}
